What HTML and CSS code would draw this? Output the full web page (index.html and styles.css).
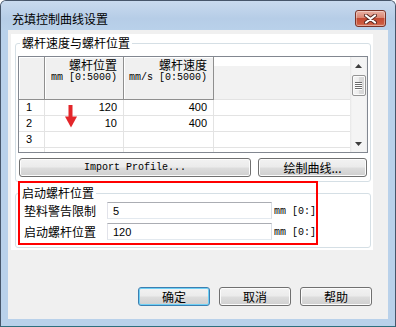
FILE: index.html
```html
<!DOCTYPE html>
<html lang="zh">
<head>
<meta charset="utf-8">
<title>充填控制曲线设置</title>
<link rel="stylesheet" href="styles.css">
</head>
<body>
<div class="window">
  <div class="titlebar">
    <span class="title">充填控制曲线设置</span>
    <button class="close" aria-label="关闭">
      <svg width="13" height="10" viewBox="0 0 13 10">
        <path d="M2 1.5 L11 8.5 M11 1.5 L2 8.5" stroke="#5a2a22" stroke-width="4" stroke-linecap="round"/>
        <path d="M2 1.5 L11 8.5 M11 1.5 L2 8.5" stroke="#ffffff" stroke-width="2.2" stroke-linecap="round"/>
      </svg>
    </button>
  </div>
  <div class="client">
    <div class="panel">
      <fieldset class="group g1">
        <legend>螺杆速度与螺杆位置</legend>
        <div class="grid">
          <div class="cells">
            <div class="hrow">
              <div class="hc corner"></div>
              <div class="hc c1"><span class="hname">螺杆位置</span><span class="hunit">mm [0:5000)</span></div>
              <div class="hc c2"><span class="hname">螺杆速度</span><span class="hunit">mm/s [0:5000)</span></div>
              <div class="hfill"></div>
            </div>
            <div class="row"><div class="rn">1</div><div class="v c1">120</div><div class="v c2">400</div><div class="fill"></div></div>
            <div class="row"><div class="rn">2</div><div class="v c1">10</div><div class="v c2">400</div><div class="fill"></div></div>
            <div class="row"><div class="rn">3</div><div class="v c1"></div><div class="v c2"></div><div class="fill"></div></div>
            <div class="row"><div class="rn"></div><div class="v c1"></div><div class="v c2"></div><div class="fill"></div></div>
          </div>
          <div class="vscroll">
            <div class="sbtn"><svg width="7" height="4" viewBox="0 0 7 4"><path d="M3.5 0 L7 4 L0 4 Z" fill="#3d3d3d"/></svg></div>
            <div class="thumb"><span></span><span></span><span></span><span></span></div>
            <div class="track"></div>
            <div class="sbtn"><svg width="7" height="4" viewBox="0 0 7 4"><path d="M0 0 L7 0 L3.5 4 Z" fill="#3d3d3d"/></svg></div>
          </div>
        </div>
        <div class="btnrow">
          <button class="btn import">Import Profile...</button>
          <button class="btn draw">绘制曲线...</button>
        </div>
      </fieldset>
      <fieldset class="group g2">
        <legend>启动螺杆位置</legend>
        <div class="frow"><label>垫料警告限制</label><input class="tb" value="5"><span class="unit">mm [0:]</span></div>
        <div class="frow"><label>启动螺杆位置</label><input class="tb" value="120"><span class="unit">mm [0:]</span></div>
      </fieldset>
    </div>
    <div class="footer">
      <button class="btn fbtn default">确定</button>
      <button class="btn fbtn">取消</button>
      <button class="btn fbtn">帮助</button>
    </div>
  </div>
  <div class="mark-box"></div>
  <svg class="mark-arrow" width="14" height="25" viewBox="0 0 14 25">
    <rect x="4.5" y="1" width="4" height="13" fill="#e3262a"/>
    <path d="M1 12.5 L13 12.5 L7 23.5 Z" fill="#e3262a"/>
  </svg>
</div>
</body>
</html>
```
FILE: styles.css
```css
* { box-sizing: border-box; margin: 0; padding: 0; }
html, body { width: 396px; height: 327px; overflow: hidden; background: #ffffff; }
body { font-family: "Noto Sans CJK SC", "Liberation Sans", sans-serif; font-size: 12px; color: #000; }

.window {
  position: relative;
  width: 396px; height: 327px;
  border: 1px solid #47566a;
  border-bottom-color: #2f6f7e;
  border-radius: 6px 6px 0 0;
  background: #b9d1ea;
  padding: 0 7px 7px;
  display: flex; flex-direction: column;
}
.titlebar {
  height: 29px;
  margin: 0 -7px;
  padding: 9px 9px 0 11px;
  display: flex; align-items: flex-start; justify-content: space-between;
  background: linear-gradient(#c9daee, #b6cde7 60%, #b9d1ea);
  border-radius: 5px 5px 0 0;
}
.title { line-height: 17px; font-size: 12px; color: #000; }
.close {
  width: 31px; height: 17px;
  border: 1px solid #7a3327;
  border-radius: 3px;
  background: linear-gradient(#eab1a4, #d98672 45%, #c44a33 50%, #cc5b3f 85%, #d9806a);
  box-shadow: inset 0 0 0 1px rgba(255,255,255,0.35);
  display: flex; align-items: center; justify-content: center;
}
.close svg { display: block; }

.client {
  flex: 1;
  background: #f0f0f0;
  padding: 4px 0 0 3px;
  display: flex; flex-direction: column;
}
.panel {
  width: 362px; height: 216px;
  background: #ffffff;
  padding: 2px 2px 2px 4px;
}

.group {
  border: 1px solid #d5dfe5;
  border-radius: 3px;
  padding: 0 2px;
  min-inline-size: 0;
}
.group legend {
  margin-left: 2px;
  padding: 0 2px;
  line-height: 14px;
  font-size: 12px;
}
.g1 { padding-bottom: 4px; }
.g2 { margin-top: 4px; padding-bottom: 7px; }

/* grid */
.grid {
  margin-top: 6px;
  height: 97px;
  border: 1px solid #828790;
  display: flex;
  background: #fff;
  overflow: hidden;
}
.cells { flex: 1; display: flex; flex-direction: column; overflow: hidden; }
.hrow { display: flex; height: 43px; flex: none; }
.hc {
  flex: none;
  background: #f0f0f0;
  border-right: 1px solid #8f8f8f;
  border-bottom: 1px solid #8f8f8f;
  box-shadow: inset 1px 1px 0 #ffffff;
}
.corner { width: 26px; }
.c1 { width: 79px; }
.c2 { width: 90px; }
.hc.c1, .hc.c2 {
  display: flex; flex-direction: column; align-items: flex-end;
  padding: 1px 6px 0 0;
}
.hname { line-height: 13px; font-size: 12px; }
.hunit { line-height: 13px; font-size: 10px; font-family: "Liberation Mono", monospace; white-space: pre; }
.hfill {
  flex: 1;
  background: linear-gradient(#ffffff 0 9px, #f2f2f2 9px);
  border-bottom: 1px solid #e3e3e3;
}
.row { display: flex; height: 16px; flex: none; }
.row > div {
  flex: none;
  border-right: 1px solid #e3e3e3;
  border-bottom: 1px solid #e3e3e3;
  font-family: "Liberation Sans", sans-serif;
  font-size: 11px;
  line-height: 15px;
}
.row .rn { width: 26px; padding-left: 7px; }
.row .v { text-align: right; padding-right: 6px; }
.row .fill { flex: 1; border-right: none; }

.vscroll {
  width: 17px; flex: none;
  background: linear-gradient(90deg, #e6e6e6, #f4f4f4 2px, #f4f4f4 15px, #ededed);
  display: flex; flex-direction: column; align-items: center;
}
.sbtn { height: 17px; width: 17px; display: flex; align-items: center; justify-content: center; flex: none; }
.sbtn svg { display: block; }
.thumb {
  width: 14px; height: 21px; margin-top: 1px; flex: none;
  border: 1px solid #959595;
  border-radius: 2px;
  background: linear-gradient(90deg, #f5f5f5, #ececec 50%, #dcdcdc 51%, #d6d6d6);
  box-shadow: inset 0 0 0 1px #fbfbfb;
  display: flex; flex-direction: column; align-items: center; justify-content: center; gap: 1px;
}
.thumb span { display: block; width: 7px; height: 1px; background: #6b6b6b; box-shadow: 0 1px 0 #ffffff; }
.track { flex: 1; }

/* buttons */
.btn {
  height: 19px;
  border: 1px solid #707070;
  border-radius: 3px;
  background: linear-gradient(#f2f2f2, #ebebeb 48%, #dddddd 52%, #cfcfcf);
  box-shadow: inset 0 0 0 1px #fcfcfc;
  font-family: "Noto Sans CJK SC", "Liberation Sans", sans-serif;
  font-size: 12px;
  line-height: 15px;
  color: #000;
}
.btnrow { display: flex; gap: 7px; margin: 5px 1px 0; }
.import { width: 232px; font-family: "Liberation Mono", monospace; font-size: 10px; }
.draw { width: 109px; }

/* form rows */
.frow { display: flex; align-items: flex-start; height: 17px; padding-left: 6px; margin-top: 2px; }
.frow + .frow { margin-top: 4px; }
.frow label { width: 83px; line-height: 14px; padding-top: 2px; flex: none; }
.tb {
  width: 165px; height: 17px; flex: none;
  border: 1px solid;
  border-color: #abadb3 #dbdfe6 #e3e9ef #e2e3ea;
  padding: 0 5px;
  font-family: "Liberation Sans", sans-serif;
  font-size: 11px;
  color: #000;
  background: #fff;
  outline: none;
}
.unit { margin-left: 2px; font-family: "Liberation Mono", monospace; font-size: 10px; line-height: 19px; white-space: pre; }

/* footer */
.footer {
  margin-top: auto;
  display: flex; justify-content: flex-end; gap: 9px;
  padding: 0 16px 13px 0;
}
.fbtn { width: 72px; }
.default {
  border-color: #3c7fb1;
  box-shadow: inset 0 0 0 1px #6fd0f5;
  background: linear-gradient(#eaf6fd, #d9f0fc 48%, #bee6fd 52%, #a7d9f5);
  background: linear-gradient(#f2f2f2, #ebebeb 48%, #dddddd 52%, #cfcfcf);
}

/* annotation overlays */
.mark-box {
  position: absolute;
  left: 17px; top: 180px;
  width: 300px; height: 64px;
  border: 2px solid #ff0000;
  pointer-events: none;
}
.mark-arrow { position: absolute; left: 63px; top: 103px; }
```
